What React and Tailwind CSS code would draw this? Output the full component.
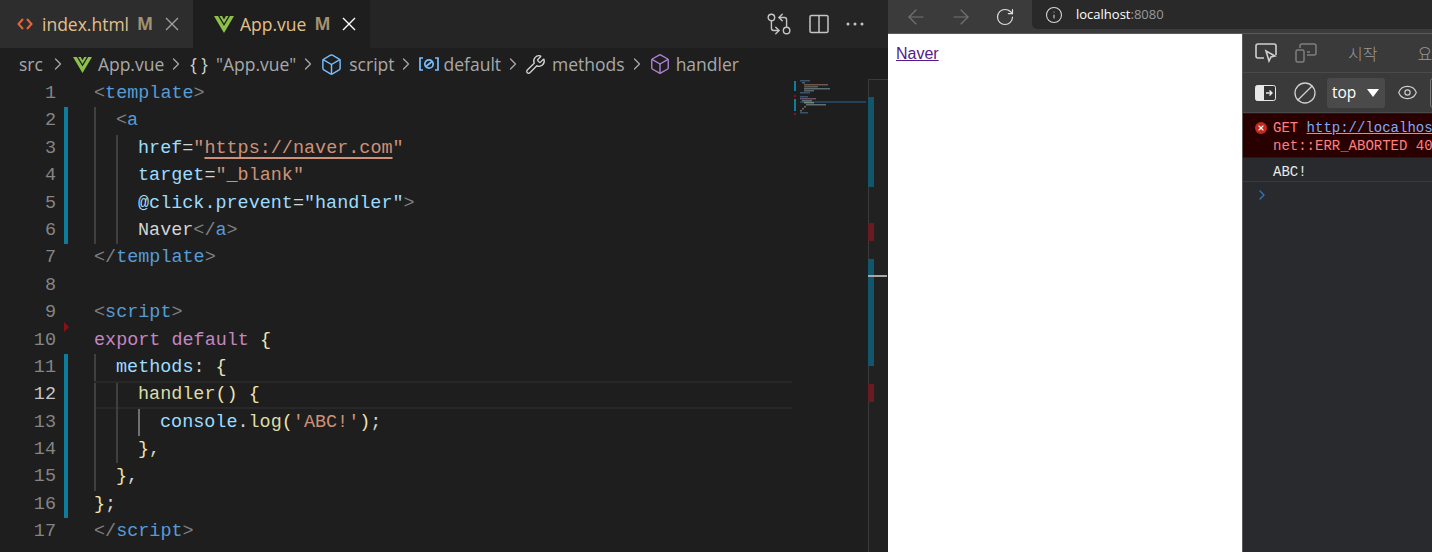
import { ArrowLeft, ArrowRight, Ban, Box, ChevronRight, Eye, GitCompareArrows, Info, RotateCw, Wrench, X } from 'lucide-react'

const TAG = 'text-[#569cd6]'
const PUNCT = 'text-[#808080]'
const ATTR = 'text-[#9cdcfe]'
const STR = 'text-[#ce9178]'
const TXT = 'text-[#d4d4d4]'
const KEY = 'text-[#c586c0]'
const FN = 'text-[#dcdcaa]'
const BRACE = 'text-[#f0e4b0]'

const LINES = [
  { guides: 0, parts: [['<', PUNCT], ['template', TAG], ['>', PUNCT]] },
  { guides: 1, changed: true, parts: [['<', PUNCT], ['a', TAG]] },
  { guides: 2, changed: true, parts: [['href', ATTR], ['=', TXT], ['"', STR], ['https://naver.com', `${STR} underline decoration-2 underline-offset-[4px]`], ['"', STR]] },
  { guides: 2, changed: true, parts: [['target', ATTR], ['=', TXT], ['"_blank"', STR]] },
  { guides: 2, changed: true, parts: [['@click.prevent', ATTR], ['=', TXT], ['"handler"', ATTR], ['>', PUNCT]] },
  { guides: 2, changed: true, parts: [['Naver', TXT], ['</', PUNCT], ['a', TAG], ['>', PUNCT]] },
  { guides: 0, parts: [['</', PUNCT], ['template', TAG], ['>', PUNCT]] },
  { guides: 0, parts: [] },
  { guides: 0, parts: [['<', PUNCT], ['script', TAG], ['>', PUNCT]] },
  { guides: 0, deleted: true, parts: [['export default', KEY], [' ', TXT], ['{', BRACE]] },
  { guides: 1, changed: true, parts: [['methods', ATTR], [':', TXT], [' ', TXT], ['{', BRACE]] },
  { guides: 2, changed: true, active: true, parts: [['handler', FN], ['()', BRACE], [' ', TXT], ['{', BRACE]] },
  { guides: 3, changed: true, parts: [['console', ATTR], ['.', TXT], ['log', FN], ['(', BRACE], ["'ABC!'", STR], [')', BRACE], [';', TXT]] },
  { guides: 2, changed: true, parts: [['}', BRACE], [',', TXT]] },
  { guides: 1, changed: true, parts: [['}', BRACE], [',', TXT]] },
  { guides: 0, changed: true, parts: [['}', BRACE], [';', TXT]] },
  { guides: 0, parts: [['</', PUNCT], ['script', TAG], ['>', PUNCT]] },
  { guides: 0, parts: [] },
]

function VueLogo({ size = 20 }) {
  return (
    <svg width={size} height={size} viewBox="0 0 20 18" className="shrink-0">
      <path d="M0 1h4l6 10L16 1h4L10 18z" fill="#8dc149" />
      <path d="M5.5 1h2.6L10 4.4 11.9 1h2.6L10 8.6z" fill="#8dc149" />
    </svg>
  )
}

function HtmlIcon() {
  return (
    <svg width="16" height="14" viewBox="0 0 16 14" fill="none" stroke="#e5673a" strokeWidth="2" className="mr-[3px] shrink-0">
      <path d="M6 2L1.500 7 6 12M10 2l4.500 5L10 12" />
    </svg>
  )
}

function Tab({ active, icon, name, width }) {
  return (
    <div className={`flex h-full shrink-0 items-center ${width} ${active ? 'bg-[#1e1e1e]' : 'bg-[#2d2d2d]'}`}>
      {icon}
      <span className="ml-[6px] text-[17.5px] text-[#e2c08d]">{name}</span>
      <span className="ml-[8px] text-[17px] font-bold text-[#a3916f]">M</span>
      <svg width="14" height="14" viewBox="0 0 14 14" fill="none" stroke="currentColor" strokeWidth="1.400" className={`ml-[12px] shrink-0 ${active ? 'text-white' : 'text-[#a0a0a0]'}`}>
        <path d="M1 1l12 12M13 1L1 13" />
      </svg>
    </div>
  )
}

function Crumb({ icon, label, gap = 'gap-[6px]' }) {
  return (
    <div className={`flex items-center ${gap}`}>
      {icon}
      <span>{label}</span>
    </div>
  )
}

function Sep({ className = '' }) {
  return <ChevronRight size={20} strokeWidth={1.5} className={`shrink-0 text-[#a9a9a9] ${className}`} />
}

function FieldIcon() {
  return (
    <svg width="22" height="18" viewBox="0 0 22 18" fill="none" stroke="#75beff" strokeWidth="1.7" className="shrink-0">
      <path d="M5 3H2v12h3M17 3h3v12h-3" />
      <circle cx="11" cy="9" r="4.2" />
      <path d="M8 11.5l6-5" />
    </svg>
  )
}

function CodeLine({ line, n }) {
  return (
    <div className="flex h-[27.4px] shrink-0">
      <div className={`w-[56px] shrink-0 text-right leading-[27.4px] ${line.active ? 'text-[#c6c6c6]' : 'text-[#858585]'}`}>{n}</div>
      <div className="relative ml-[8px] w-[4px] shrink-0">
        {line.changed && <div className="h-full w-full bg-[#0c7d9d]" />}
        {line.deleted && <div className="absolute left-0 top-[-5px] h-0 w-0 border-y-[5px] border-l-[5px] border-y-transparent border-l-[#8a1018]" />}
      </div>
      <div className={`ml-[26px] flex min-w-0 flex-1 ${line.active ? 'border-y-2 border-[#282828]' : ''}`}>
        {Array.from({ length: line.guides }).map((_, i) => (
          <div key={i} className={`h-[27.4px] w-[22px] shrink-0 border-l-2 ${n === 13 && i === 2 ? 'border-[#707070]' : 'border-[#404040]'}`} />
        ))}
        <div className={`whitespace-pre ${line.active ? 'leading-[23.4px]' : 'leading-[27.4px]'}`}>
          {line.parts.map(([text, cls], i) => <span key={i} className={cls}>{text}</span>)}
        </div>
      </div>
    </div>
  )
}

// tiny code preview drawn beside the editor
function Minimap() {
  const rows = [
    [8, 10, '#4a7a9e'], [10, 3, '#5f8fb0'], [12, 24, '#a87c68'], [12, 14, '#8f8272'], [12, 26, '#7fa5b8'],
    [12, 10, '#8f8f8f'], [8, 10, '#4a7a9e'], [8, 0, ''], [8, 8, '#4a7a9e'],
    [8, 16, '#a0709a'], [10, 10, '#7fa5b8'], [12, 10, '#b5b58a'], [14, 20, '#8da0a8'], [12, 2, '#999'],
    [10, 2, '#999'], [8, 2, '#999'], [8, 8, '#4a7a9e'],
  ]
  return (
    <svg width="76" height="60" className="absolute left-[792px] top-[80px]">
      <rect x="2" y="1" width="2" height="10" fill="#0c7d9d" />
      <rect x="2" y="15" width="2" height="2" fill="#8a1018" />
      <rect x="2" y="19" width="2" height="12" fill="#0c7d9d" />
      <rect x="2" y="33" width="2" height="2" fill="#8a1018" />
      <rect x="8" y="21" width="66" height="2" fill="#264056" />
      {rows.map(([x, w, c], i) => w > 0 && <rect key={i} x={x} y={i * 2} width={w} height="1.500" fill={c} opacity="0.6" />)}
    </svg>
  )
}

function OverviewRuler() {
  return (
    <div className="absolute bottom-0 left-[868px] top-[79px] w-[20px] border-l border-t border-[#3a3a3a] bg-[#212121]">
      <div className="absolute -left-px top-[17px] h-[90px] w-[6px] bg-[#12566b]" />
      <div className="absolute -left-px top-[143px] h-[18px] w-[6px] bg-[#6a1a22]" />
      <div className="absolute -left-px top-[179px] h-[107px] w-[6px] bg-[#12566b]" />
      <div className="absolute -left-px top-[304px] h-[18px] w-[6px] bg-[#6a1a22]" />
      <div className="absolute -left-px top-[195px] h-[2px] w-[19px] bg-[#a8a8a8]" />
    </div>
  )
}

function Editor() {
  return (
    <div className="relative flex h-full w-[888px] shrink-0 flex-col overflow-hidden bg-[#1e1e1e] font-['Open_Sans','Noto_Sans',sans-serif]">
      <div className="flex h-[48px] shrink-0 items-center bg-[#252526]">
        <Tab width="w-[193px] pl-[17px]" name="index.html" icon={<HtmlIcon />} />
        <Tab width="w-[177px] pl-[21px]" active name="App.vue" icon={<VueLogo />} />
        <div className="ml-auto flex items-center gap-[17px] pr-[24px] text-[#c5c5c5]">
          <GitCompareArrows size={26} strokeWidth={1.3} />
          <svg width="20" height="20" viewBox="0 0 20 20" fill="none" stroke="currentColor" strokeWidth="1.5">
            <rect x="1" y="1.5" width="18" height="17" rx="1.5" />
            <path d="M10 1.5v17" />
          </svg>
          <svg width="18" height="4" viewBox="0 0 18 4" fill="currentColor">
            <circle cx="2" cy="2" r="1.5" />
            <circle cx="9" cy="2" r="1.5" />
            <circle cx="16" cy="2" r="1.5" />
          </svg>
        </div>
      </div>
      <div className="flex h-[32px] shrink-0 items-center gap-[2px] pl-[19px] text-[17.5px] text-[#a9a9a9]">
        <span>src</span>
        <Sep className="mx-[3px]" />
        <Crumb icon={<VueLogo size={19} />} label="App.vue" />
        <Sep className="mr-[2px]" />
        <Crumb gap="gap-[8px]" icon={<span className="text-[#d4d4d4]">{'{ }'}</span>} label={'"App.vue"'} />
        <Sep />
        <Crumb icon={<Box size={23} strokeWidth={1.5} className="shrink-0 text-[#75beff]" />} label="script" />
        <Sep className="-ml-[1px]" />
        <Crumb gap="gap-[4px]" icon={<FieldIcon />} label="default" />
        <Sep />
        <Crumb icon={<Wrench size={21} strokeWidth={1.5} className="shrink-0 text-[#d4d4d4]" />} label="methods" />
        <Sep />
        <Crumb gap="gap-[5px]" icon={<Box size={22} strokeWidth={1.5} className="shrink-0 text-[#b180d7]" />} label="handler" />
      </div>
      <div className="flex w-[792px] flex-col font-['Liberation_Mono',monospace] text-[18.46px]">
        {LINES.map((line, i) => <CodeLine key={i} line={line} n={i + 1} />)}
      </div>
      <Minimap />
      <OverviewRuler />
    </div>
  )
}

function InspectIcon() {
  return (
    <svg width="22" height="20" viewBox="0 0 22 20" fill="none" stroke="#d0d0d0" strokeWidth="1.6" className="shrink-0">
      <path d="M9 15H3a2 2 0 0 1-2-2V3a2 2 0 0 1 2-2h16a2 2 0 0 1 2 2v9" />
      <path d="M11 8l9 5-4 1-2 4z" />
    </svg>
  )
}

function DeviceIcon() {
  return (
    <svg width="22" height="20" viewBox="0 0 22 20" fill="none" stroke="#7f7f7f" strokeWidth="1.5" className="ml-[18px] shrink-0">
      <path d="M5 5V3a2 2 0 0 1 2-2h12a2 2 0 0 1 2 2v7a2 2 0 0 1-2 2h-7" />
      <rect x="1" y="7" width="8" height="12" rx="1.5" />
      <path d="M12 9h3" />
    </svg>
  )
}

function SidebarIcon() {
  return (
    <svg width="21" height="16" viewBox="0 0 21 16" className="shrink-0">
      <rect x="0.5" y="0.5" width="20" height="15" rx="2" fill="#333" stroke="#e8e8e8" />
      <path d="M2 0.5h7v15H2a1.5 1.5 0 0 1-1.500-1.500V2A1.500 1.500 0 0 1 2 0.500z" fill="#e8e8e8" />
      <path d="M11 8h6M14.500 5.500L17 8l-2.500 2.500" fill="none" stroke="#e8e8e8" strokeWidth="1.400" />
    </svg>
  )
}

function Browser() {
  return (
    <div className="flex h-full min-w-0 flex-1 flex-col overflow-hidden font-['Open_Sans','Noto_Sans',sans-serif]">
      <div className="flex h-[34px] shrink-0 items-center border-b border-[#5a5a5a] bg-[#3b3b3b]">
        <ArrowLeft size={24} strokeWidth={1.1} className="ml-[16px] shrink-0 text-[#757575]" />
        <ArrowRight size={24} strokeWidth={1.1} className="ml-[21px] shrink-0 text-[#757575]" />
        <RotateCw size={20} strokeWidth={1.4} className="ml-[22px] shrink-0 text-[#e0e0e0]" />
        <div className="ml-[17px] flex h-[29px] flex-1 items-center self-start rounded-bl-[5px] bg-[#292929] pl-[13px] text-[13px]">
          <Info size={18} strokeWidth={1.4} className="shrink-0 text-[#d8d8d8]" />
          <span className="ml-[13px] text-white">localhost</span>
          <span className="text-[#9a9a9a]">:8080</span>
        </div>
      </div>
      <div className="flex min-h-0 flex-1">
        <div className="w-[354px] shrink-0 bg-white pl-[8px] pt-[10px] font-['Liberation_Sans',sans-serif] text-[16px] leading-[19px] text-[#551a8b] underline">
          Naver
        </div>
        <div className="min-w-0 flex-1 overflow-hidden border-l border-[#5a5a5a] bg-[#292a2d]">
          <div className="flex h-[39px] items-center border-b border-[#4a4a4a] bg-[#3a3a3a] pl-[12px]">
            <InspectIcon />
            <DeviceIcon />
            <span className="ml-[31px] whitespace-nowrap font-['Noto_Sans_CJK_KR',sans-serif] text-[16px] font-light text-[#9a9a9a]">시작</span>
            <span className="ml-[40px] whitespace-nowrap font-['Noto_Sans_CJK_KR',sans-serif] text-[16px] font-light text-[#9a9a9a]">요소</span>
          </div>
          <div className="flex h-[40px] items-center border-b border-[#4a4a4a] bg-[#3a3a3a] pl-[12px]">
            <SidebarIcon />
            <Ban size={24} strokeWidth={1.3} className="ml-[17px] shrink-0 -scale-x-100 text-[#d0d0d0]" />
            <div className="ml-[10px] flex h-[30px] w-[58px] shrink-0 items-center rounded-[3px] bg-[#4a4a4a] pl-[5px] text-[15.5px] text-white">
              top
              <svg width="12" height="8" viewBox="0 0 12 8" fill="white" className="ml-[11px] shrink-0">
                <path d="M0 0h12L6 8z" />
              </svg>
            </div>
            <Eye size={21} strokeWidth={1.3} className="ml-[12px] shrink-0 text-[#d0d0d0]" />
            <div className="ml-[12px] h-[30px] w-[10px] shrink-0 rounded-l-[3px] border border-[#777]" />
          </div>
          <div className="relative h-[45px] whitespace-nowrap border-y border-[#5c0000] bg-[#290000] pl-[30px] pt-[5px] font-['Liberation_Mono',monospace] text-[14px] leading-[18px] text-[#ff8080]">
            <div className="absolute left-[12px] top-[8px] flex h-[12px] w-[12px] items-center justify-center rounded-full bg-[#c5281c] text-white">
              <X size={8} strokeWidth={3.5} />
            </div>
            <div>GET <span className="text-[#7cacf8] underline">http://localhost:8080/favicon.ico</span></div>
            <div>net::ERR_ABORTED 404</div>
          </div>
          <div className="h-[24px] border-b border-[#3a3a3a] pl-[30px] pt-[5px] font-['Liberation_Mono',monospace] text-[14px] leading-[18px] text-[#e8eaed]">ABC!</div>
          <ChevronRight size={16} strokeWidth={2} className="ml-[11px] mt-[5px] text-[#2f74c0]" />
        </div>
      </div>
    </div>
  )
}

export default function App() {
  return (
    <div className="flex h-[552px] w-[1432px] overflow-hidden bg-[#1e1e1e]">
      <Editor />
      <Browser />
    </div>
  )
}
